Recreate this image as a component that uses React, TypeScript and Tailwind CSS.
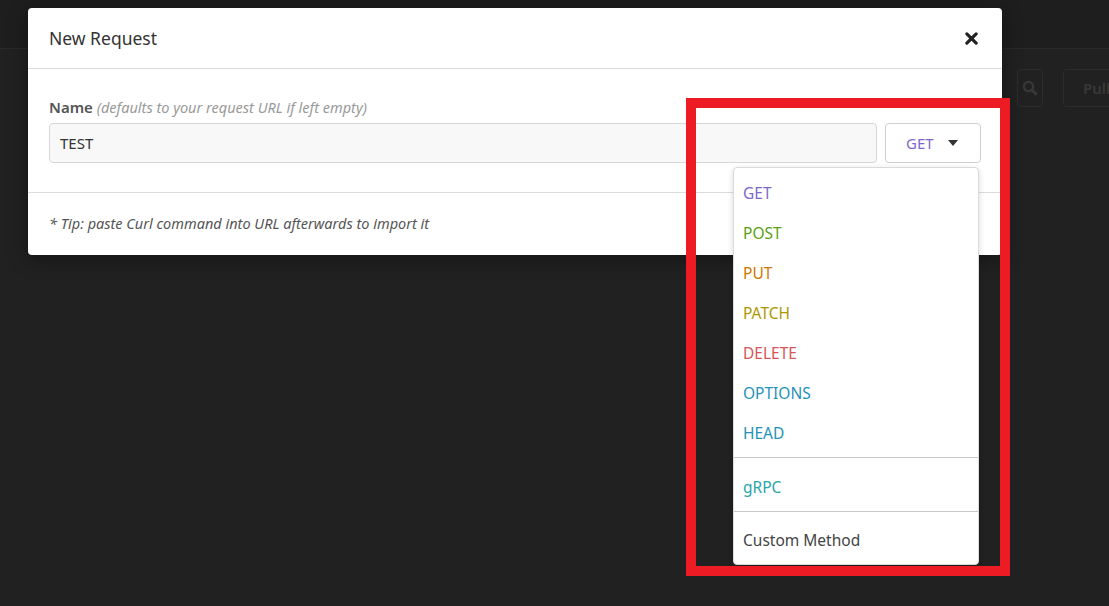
import React from "react";

const F = { fontFamily: '"Noto Sans", "Open Sans", sans-serif' };

const methods: { name: string; cls: string }[] = [
  { name: "GET", cls: "text-[#7d69cb]" },
  { name: "POST", cls: "text-[#59a210]" },
  { name: "PUT", cls: "text-[#d07502]" },
  { name: "PATCH", cls: "text-[#ae9602]" },
  { name: "DELETE", cls: "text-[#d65555]" },
  { name: "OPTIONS", cls: "text-[#2492b8]" },
  { name: "HEAD", cls: "text-[#2492b8]" },
];

function Item({ name, cls }: { name: string; cls: string }) {
  return (
    <div className={`h-[40px] flex items-center px-[9px] text-[15.5px] ${cls}`}>{name}</div>
  );
}

export default function App() {
  return (
    <div className="relative w-[1109px] h-[606px] overflow-hidden bg-[#212121]" style={F}>
      {/* background app */}
      <div className="h-[49px] bg-[#1e1e1e] border-b border-[#2a2a2a]" />
      <div className="flex justify-end gap-[20px] pt-[20px]">
        <div className="w-[26px] h-[38px] rounded-[4px] border border-[#2c2c2c] flex items-center justify-center">
          <svg width="16" height="16" viewBox="0 0 16 16">
            <circle cx="6.5" cy="6.5" r="4.6" fill="none" stroke="#383838" strokeWidth="2.4" />
            <path d="M10 10l4 4" stroke="#383838" strokeWidth="2.8" strokeLinecap="round" />
          </svg>
        </div>
        <div className="w-[46px] h-[38px] rounded-l-[4px] border border-r-0 border-[#2c2c2c] flex items-center pl-[19px] text-[15px] font-semibold text-[#383838]">
          Pull
        </div>
      </div>

      {/* modal */}
      <div className="absolute left-[28px] top-[8px] w-[974px] h-[247px] bg-white rounded-[4px] shadow-[0_4px_20px_rgba(0,0,0,0.4)] flex flex-col">
        <div className="h-[61px] border-b border-[#dcdcdc] flex items-center justify-between pl-[21px] pr-[24px] pt-[1px]">
          <span className="text-[17.5px] text-[#333]">New Request</span>
          <svg width="13" height="13" viewBox="0 0 14 14">
            <path d="M2 2L12 12M12 2L2 12" stroke="#222" strokeWidth="3.4" strokeLinecap="round" />
          </svg>
        </div>
        <div className="h-[124px] border-b border-[#dcdcdc] pt-[28px] px-[21px]">
          <div className="text-[15px] leading-[20px] text-[#555] mb-[6px]">
            <span className="font-semibold">Name</span>{" "}
            <span className="italic text-[#999] text-[14.5px]">(defaults to your request URL if left empty)</span>
          </div>
          <div className="flex gap-[8px]">
            <div className="flex-1 h-[40px] bg-[#f8f8f8] border border-[#d6d6d6] rounded-[4px] flex items-center px-[10px] text-[15px] text-[#333]">
              TEST
            </div>
            <div className="w-[96px] h-[40px] border border-[#cfcfcf] rounded-[4px] flex items-center pl-[20px] gap-[14px] text-[15px] text-[#7d69cb]">
              <span>GET</span>
              <svg width="10" height="6" viewBox="0 0 10 6">
                <path d="M0 0h10L5 6z" fill="#333" />
              </svg>
            </div>
          </div>
        </div>
        <div className="flex-1 flex items-center px-[21px] text-[14.5px] italic text-[#555]">
          * Tip: paste Curl command into URL afterwards to import it
        </div>
      </div>

      {/* dropdown */}
      <div className="absolute left-[733px] top-[167px] w-[246px] h-[398px] bg-white border border-[#dadada] rounded-[4px] shadow-[0_2px_6px_rgba(0,0,0,0.15)] pt-[6px]">
        {methods.map((m) => (
          <Item key={m.name} name={m.name} cls={m.cls} />
        ))}
        <div className="mt-[3px] mb-[10px] h-px bg-[#c8c8c8]" />
        <Item name="gRPC" cls="text-[#2aa5a8]" />
        <div className="mt-[3px] mb-[9px] h-px bg-[#c8c8c8]" />
        <Item name="Custom Method" cls="text-[#444]" />
      </div>

      {/* annotation */}
      <div className="absolute left-[686px] top-[98px] w-[324px] h-[478px] border-[10px] border-[#ed1c24] pointer-events-none" />
    </div>
  );
}
